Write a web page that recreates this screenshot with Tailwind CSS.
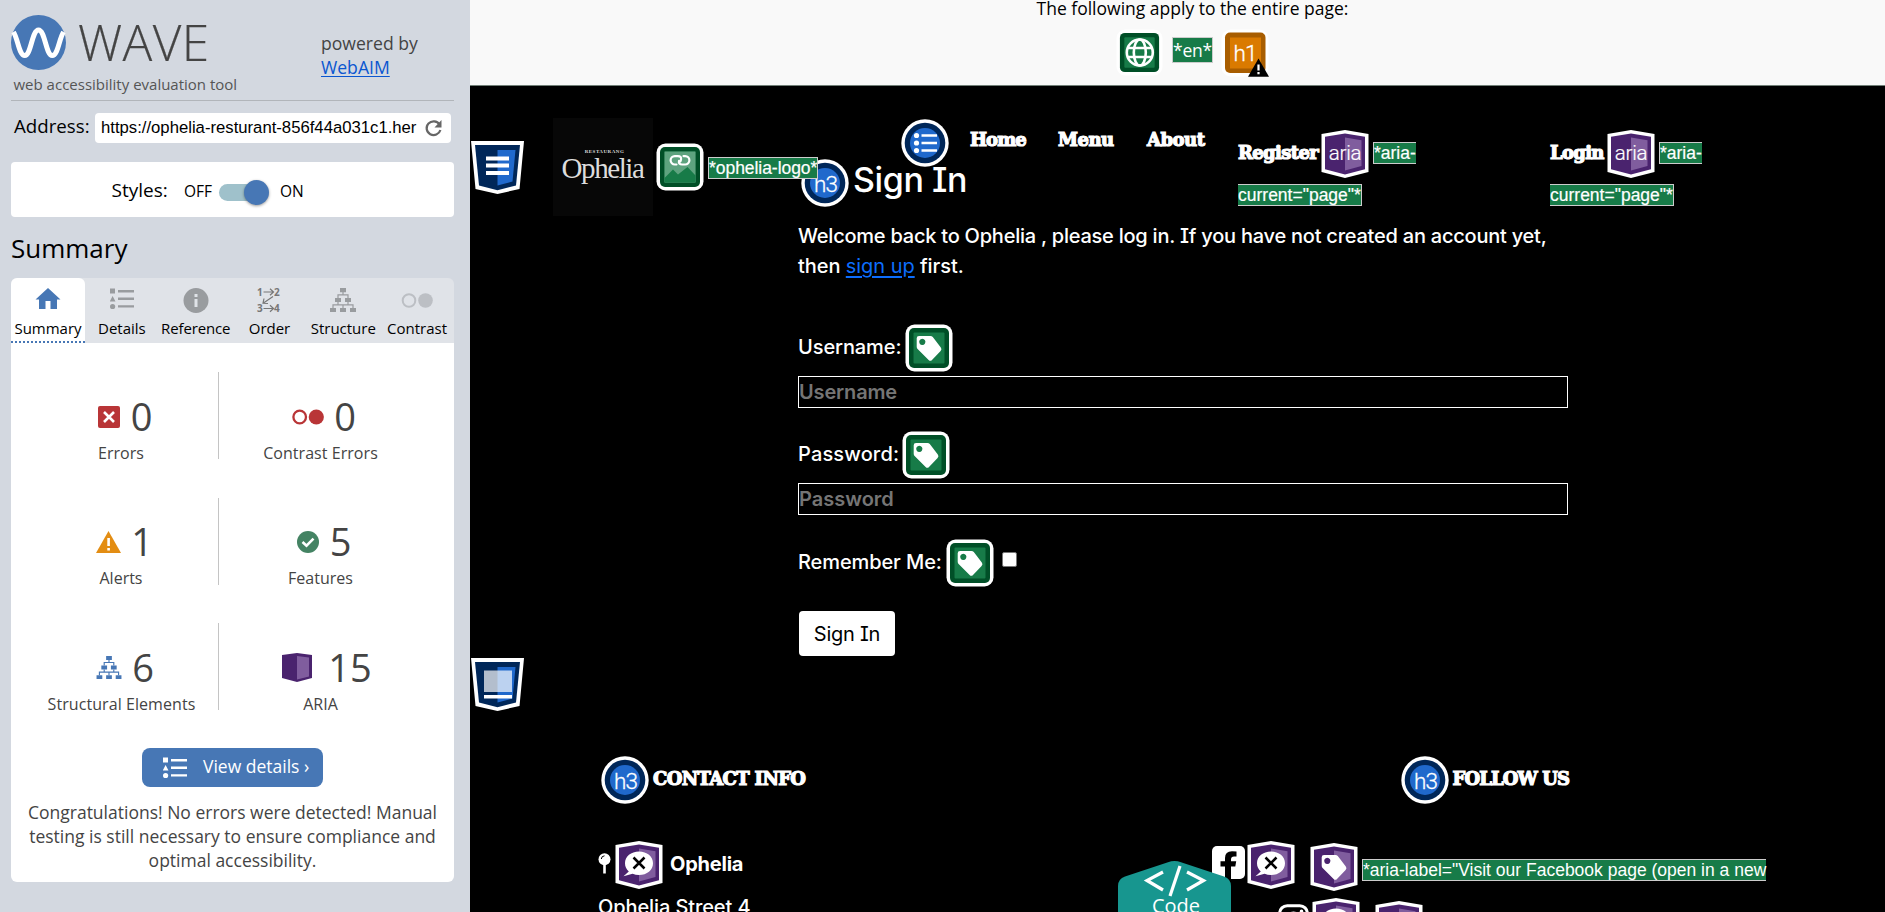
<!DOCTYPE html>
<html lang="en">
<head>
<meta charset="utf-8">
<title>WAVE - Ophelia</title>
<script src="https://cdn.jsdelivr.net/npm/@tailwindcss/browser@4"></script>
</head>
<body class="font-['Open_Sans',sans-serif]">
<svg class="hidden" xmlns="http://www.w3.org/2000/svg">
  <defs>
    <symbol id="list" viewBox="0 0 24 22"><path d="M0 0.5h5v5h-5zM8 2h16v2.4H8zM8 9.6h16V12H8zM8 17.2h16v2.4H8zM2.6 8l2.9 5.5H-.2z"/><circle cx="2.6" cy="18.5" r="2.6"/></symbol>
    <symbol id="tree" viewBox="0 0 26 24"><path d="M10 0h6v4.3h-6zM5 10h6v4H5zM15 10h6v4h-6zM0 20h6v4H0zM10 20h6v4h-6zM20 20h6v4h-6z"/><path d="M13 4v3M8 10V6.8h10V10M8 14v2.8M18 14v2.8M3 20v-3.2h20V20M13 20v-3.2" fill="none" stroke="currentColor" stroke-width="1.2"/></symbol>
    <symbol id="greenbox" viewBox="0 0 48 48"><rect x=".5" y=".5" width="47" height="47" rx="9" fill="#fff"/><rect x="4" y="4" width="40" height="40" rx="5" fill="#004f27"/><rect x="8.5" y="8.5" width="31" height="31" rx="1" fill="#177b48"/></symbol>
    <symbol id="tagshape" viewBox="0 0 48 48"><path fill-rule="evenodd" d="M14 12h11.500q1.300 0 2.300 1l8 10.500q1.400 1.900-.2 3.500l-8.600 8.900q-1.700 1.700-3.400 0L12.600 25q-.9-1-.9-2.300V14.300q0-2.300 2.300-2.300zM17.300 14.800a3.100 3.100 0 1 0 .01 0z"/></symbol>
    <symbol id="label" viewBox="0 0 48 48"><use href="#greenbox"/><use href="#tagshape" fill="#fff"/></symbol>
    <symbol id="h3" viewBox="0 0 48 48"><circle cx="24" cy="24" r="23.700" fill="#fff"/><circle cx="24" cy="24" r="20.300" fill="#002759"/><circle cx="24" cy="24" r="15" fill="#2069cc"/><text x="24.500" y="32.500" text-anchor="middle" font-family="Roboto" font-weight="300" font-size="22.500" letter-spacing="-1" fill="#fff" stroke="#fff" stroke-width=".3">h3</text></symbol>
    <symbol id="shield" viewBox="0 0 53 53"><path d="M0 0h53l-4.500 48L26.500 53 4.500 48z" fill="#fff"/><path d="M4 4h45l-4 40.500-18.500 4.700L8 44.500z" fill="#002759"/><path d="M26.500 9h18l-3 31.500-15 4z" fill="#2069cc"/></symbol>
    <symbol id="ariabox" viewBox="0 0 48 48"><path d="M.5 4L24 0l23.500 4v38L24 48 .5 42z" fill="#fff"/><path d="M4 6.700L24 3.500l20 3.200v32.600L24 44.500 4 39.300z" fill="#4a236e"/><path d="M24 7.500l16.500 2.800V36L24 40.500z" fill="#805d9e"/></symbol>
    <symbol id="ariatext" viewBox="0 0 48 48"><use href="#ariabox"/><text x="24" y="29.500" text-anchor="middle" font-family="Roboto" font-weight="300" font-size="20.500" letter-spacing="-.2" fill="#fff" stroke="#fff" stroke-width=".2">aria</text></symbol>
    <symbol id="ariahidden" viewBox="0 0 48 48"><use href="#ariabox"/><path d="M24 10.500c8 0 14 5 14 11.700s-6 11.800-14 11.800c-2.300 0-4.500-.4-6.400-1.200L8.500 35.300l5.300-4.800c-2.400-2.100-3.800-5-3.800-8.300 0-6.700 6-11.700 14-11.700z" fill="#fff"/><path d="M18.500 16.500l11 11M29.500 16.500l-11 11" stroke="#000" stroke-width="2.500"/></symbol>
    <symbol id="arialabel" viewBox="0 0 48 48"><use href="#ariabox"/><use href="#tagshape" fill="#fff"/></symbol>
  </defs>
</svg>

<div class="flex h-[912px] w-[1885px] overflow-hidden bg-black">

  <!-- WAVE sidebar -->
  <aside class="flex h-full w-[470px] shrink-0 flex-col bg-[#d3d8e0] pr-4 pl-[11px] text-[#444]">
    <div class="flex h-[101px] border-b border-[#b1b5ba] pt-[15px]">
      <div class="w-[310px]">
        <div class="flex h-[55px]">
          <svg class="size-[55px] shrink-0" viewBox="0 0 55 55"><circle cx="27.500" cy="27.500" r="27.500" fill="#4777b5"/><path d="M2.500 17C7 24 8 40.500 13.800 40.500 20 40.500 21 15 27.500 15S35 40.500 41.200 40.500C47 40.500 48 24 52.500 17" fill="none" stroke="#fff" stroke-width="5"/></svg>
          <div class="ml-[12px] text-[49.500px] leading-[55px] font-light tracking-[.4px] [-webkit-text-stroke:.2px_#444]">WAVE</div>
        </div>
        <div class="ml-[2.500px] whitespace-nowrap text-[15px] leading-[20px] pt-[4px] text-[#555]">web accessibility evaluation tool</div>
      </div>
      <div class="pt-[16px] text-[17.600px] leading-[24px]">powered by<br><a class="text-[#0a56d0] underline underline-offset-2">WebAIM</a></div>
    </div>
    <div class="mt-3 flex h-[30px] items-center text-black">
      <div class="ml-[3px] w-[81px] whitespace-nowrap text-[18.700px] leading-[24px] pb-[5px]">Address:</div>
      <div class="flex h-[30px] w-[356px] items-center overflow-hidden rounded-[4px] bg-white pl-[6px]">
        <span class="whitespace-nowrap font-['Liberation_Sans',sans-serif] text-[16.700px] pb-px">https://ophelia-resturant-856f44a031c1.her</span>
        <svg class="ml-[9px] size-[18px] shrink-0" viewBox="0 0 18 18"><path d="M14.500 5.500A7 6.800 0 1 0 15.400 11" fill="none" stroke="#666" stroke-width="2.200"/><path d="M16.500 1v7.500H9.500z" fill="#666"/></svg>
      </div>
    </div>
    <div class="mt-[19px] flex h-[55px] items-center rounded-[4px] bg-white pl-[100.500px] text-black">
      <span class="w-[72.500px] pt-px text-[19px] leading-6">Styles:</span>
      <span class="w-[35px] pt-[2px] text-[15.500px] leading-6">OFF</span>
      <div class="relative mt-[5px] h-[17px] w-[49px] rounded-full bg-[#9fc1cb]"><div class="absolute -top-1 left-[25px] size-[25px] rounded-full bg-[#4777b5] shadow-[0_1px_3px_rgba(0,0,0,.4)]"></div></div>
      <span class="ml-3 pt-[2px] text-[15.500px] leading-6">ON</span>
    </div>
    <h2 class="mt-[14px] h-[47px] text-[26px] leading-[34px] text-black">Summary</h2>
    <div class="flex h-[65px] rounded-t-[6px] bg-[#e0e3e8] text-center text-[15px] leading-[20px] text-black">
      <div class="flex w-[74px] flex-col items-center rounded-t-[6px] border-b-2 border-dotted border-[#4777b5] bg-white pt-[10px]">
        <svg class="h-[30px] w-[26px]" viewBox="0 0 26 30" fill="#4777b5"><path d="M13 0l12.500 11.500H22V21h-6.500v-8h-5v8H4V11.500H.5z"/></svg>Summary</div>
      <div class="flex w-[73.800px] flex-col items-center pt-[10px]">
        <div class="flex h-[30px] w-[24px]"><svg class="h-[22px] w-6" fill="#999c9f"><use href="#list"/></svg></div>Details</div>
      <div class="flex w-[73.800px] flex-col items-center pt-[10px] tracking-[-.15px]">
        <svg class="h-[30px] w-[26px]" viewBox="0 0 26 30"><circle cx="13" cy="12.500" r="12.500" fill="#999c9f"/><path d="M11.500 6h3v3h-3zM11.500 11h3v8h-3z" fill="#e0e3e8"/></svg>Reference</div>
      <div class="flex w-[73.800px] flex-col items-center pt-[10px]">
        <svg class="h-[30px] w-[26px]" viewBox="0 0 26 30"><g font-family="Open Sans" font-weight="700" font-size="10" fill="#777"><text x="1" y="7.500">1</text><text x="18" y="7.500">2</text><text x="1" y="24">3</text><text x="18" y="24">4</text></g><path d="M7.500 4h10M14 .8L17.500 4 14 7.200M7.500 20.500h10M14 17.300l3.500 3.200-3.500 3.200M17 8.500l-9.500 6.500M8 10.500L7 15.300l5 .2" fill="none" stroke="#777" stroke-width="1.200"/></svg>Order</div>
      <div class="flex w-[73.800px] flex-col items-center pt-[10px]">
        <div class="h-[30px] w-[26px]"><svg class="h-6 w-[26px] text-[#999c9f]" fill="currentColor"><use href="#tree"/></svg></div>Structure</div>
      <div class="flex w-[73.800px] flex-col items-center pt-[10px]">
        <svg class="h-[30px] w-[32px]" viewBox="0 0 32 30"><circle cx="8" cy="12.500" r="6.300" fill="none" stroke="#bcbfc4" stroke-width="2"/><circle cx="24.500" cy="12.500" r="7.300" fill="#bcbfc4"/></svg>Contrast</div>
    </div>
    <div class="h-[539px] rounded-b-[6px] bg-white pt-[29px]">
      <div class="grid auto-rows-[87px] grid-cols-[207px_1fr] gap-y-[38.500px] text-center text-[16px]">
        <div class="flex flex-col items-center pt-[24px] pr-[2px] pl-[15px]">
          <div class="flex h-[41px] items-center pl-[8px]"><svg class="mr-[11px] size-[22px]" viewBox="0 0 22 22"><rect width="22" height="22" rx="2" fill="#b93537"/><path d="M6 6l10 10M16 6L6 16" stroke="#fff" stroke-width="2.600"/></svg><span class="text-[38px] leading-[41px]">0</span></div>
          <div class="leading-6 pt-[4px]">Errors</div></div>
        <div class="flex flex-col items-center border-l border-[#c4c4c4] pt-[24px] pr-[32px]">
          <div class="flex h-[41px] items-center pl-[7px]"><svg class="mr-[10px] h-4 w-8" viewBox="0 0 32 16"><circle cx="7.700" cy="8" r="6.300" fill="none" stroke="#b93537" stroke-width="2.300"/><circle cx="24.300" cy="8" r="7.600" fill="#b93537"/></svg><span class="text-[38px] leading-[41px]">0</span></div>
          <div class="leading-6 pt-[4px] tracking-[.05px]">Contrast Errors</div></div>

        <div class="flex flex-col items-center pt-[23px] pr-[2px] pl-[15px]">
          <div class="flex h-[41px] items-center pl-[7px]"><svg class="mr-[10px] -mb-[1px] h-[22px] w-[25px]" viewBox="0 0 25 22"><path d="M12.500 0L25 22H0z" fill="#e38d13"/><path d="M11.300 7h2.600v8h-2.600zM11.300 17h2.600v2.600h-2.600z" fill="#fff"/></svg><span class="text-[38px] leading-[41px]">1</span></div>
          <div class="leading-6 pt-[4px]">Alerts</div></div>
        <div class="flex flex-col items-center border-l border-[#c4c4c4] pt-[23px] pr-[32px]">
          <div class="flex h-[41px] items-center pl-[7px]"><svg class="mr-[11px] -mb-[1px] size-[22px]" viewBox="0 0 22 22"><circle cx="11" cy="11" r="11" fill="#448363"/><path d="M5.500 11l4 3.700 7-7" fill="none" stroke="#fff" stroke-width="2.600"/></svg><span class="text-[38px] leading-[41px]">5</span></div>
          <div class="leading-6 pt-[4px]">Features</div></div>

        <div class="flex flex-col items-center pt-[24px] pr-[2px] pl-[15px]">
          <div class="flex h-[41px] items-center pl-[8px]"><svg class="mr-[10px] h-[23px] w-[26px] text-[#4777b5]" fill="currentColor"><use href="#tree"/></svg><span class="text-[38px] leading-[41px]">6</span></div>
          <div class="leading-6 pt-[4px] pl-px whitespace-nowrap tracking-[.07px]">Structural Elements</div></div>
        <div class="flex flex-col items-center border-l border-[#c4c4c4] pt-[24px] pr-[32px]">
          <div class="flex h-[41px] items-center pl-[13px]"><svg class="mr-[16px] -mt-[1px] h-[29px] w-[30px]" viewBox="0 0 30 29"><path d="M0 2l15-2 15 2v23l-15 4L0 25z" fill="#4a236e"/><path d="M15 3l12 1.500v19L15 26.500z" fill="#805d9e"/></svg><span class="text-[38px] leading-[41px]">15</span></div>
          <div class="leading-6 pt-[4px]">ARIA</div></div>
      </div>
      <div class="mx-auto mt-[38px] flex h-[39px] w-[181px] items-center rounded-[8px] bg-[#4777b5] pl-[21px] text-[17.500px] text-white">
        <svg class="mr-[16px] h-[22px] w-6" fill="#fff"><use href="#list"/></svg><span class="whitespace-nowrap pb-[2px]">View details ›</span>
      </div>
      <p class="mt-[13px] text-center text-[17.500px] leading-[24px] whitespace-nowrap">Congratulations! No errors were detected! Manual<br>testing is still necessary to ensure compliance and<br>optimal accessibility.</p>
    </div>
  </aside>

  <!-- Evaluated page -->
  <main class="relative flex h-full w-[1415px] flex-col overflow-hidden bg-black font-['Inter',sans-serif] text-[20px] leading-[30px] font-medium tracking-[-.23px] text-white [font-feature-settings:'cv08']">
    <div class="flex h-[86px] shrink-0 flex-col items-center border-b border-[#717f77] bg-[#f9f9f9] pl-[30px] font-['Open_Sans',sans-serif] font-normal tracking-normal text-black">
      <div class="h-[26px] text-[17.500px] leading-[17px]">The following apply to the entire page:</div>
      <div class="flex items-start">
        <svg class="mt-[3px] size-[47px]" viewBox="0 0 47 47"><use href="#greenbox"/><g fill="none" stroke="#fff" stroke-width="2.600"><circle cx="23.800" cy="23.500" r="13"/><ellipse cx="23.800" cy="23.500" rx="6" ry="13"/><path d="M12 19h23.600M12 28h23.600"/></g></svg>
        <span class="mt-[11px] ml-[9px] h-[26px] w-[41px] border border-[#ccc] bg-[#177b48] text-center text-[17.500px] leading-[24px] tracking-[-.2px] text-white">*en*</span>
        <svg class="mt-[3px] ml-[8px] h-[48px] w-[48px]" viewBox="0 0 48 48"><rect x=".5" y=".5" width="47" height="47" rx="9" fill="#fff"/><rect x="4" y="3.500" width="40.500" height="40.500" rx="5" fill="#a85d00"/><rect x="9" y="8.500" width="31" height="31" fill="#da7a00"/><text x="24" y="32" text-anchor="middle" font-family="Roboto" font-weight="300" font-size="22.500" letter-spacing="-1" fill="#fff" stroke="#fff" stroke-width=".3">h1</text><path d="M37.500 29.500L48 47.700H27z" fill="#000"/><path d="M36.400 35.500h2.200v6h-2.200zM36.400 43h2.200v2.200h-2.200z" fill="#fff"/></svg>
      </div>
    </div>

    <header class="relative z-10 flex h-[73px] shrink-0 items-start whitespace-nowrap font-['DejaVu_Serif',serif] text-[18px] font-bold tracking-[-.9px] [-webkit-text-stroke:1.200px_white]">
      <svg class="mt-[55px] ml-px size-[53px] shrink-0"><use href="#shield"/><path d="M15 15.500h23v4H15zM15 22.500h23v4H15zM15 30h23v4H15z" fill="#fff"/></svg>
      <div class="mt-[32px] ml-[29px] h-[98px] w-[100px] shrink-0 bg-[#070707] text-center font-['Liberation_Serif',serif] font-normal text-[#ddd] [-webkit-text-stroke:0]">
        <div class="mt-[29px] ml-[3px] text-[5px] leading-[9px] font-bold tracking-[.5px]">RESTAURANG</div>
        <div class="-mt-[2px] -ml-px text-[29px] leading-[29px] tracking-[-1.400px]">Ophelia</div>
      </div>
      <svg class="mt-[57px] ml-[3px] size-[48px] shrink-0" viewBox="0 0 48 48"><use href="#greenbox"/><path d="M8.500 8.500h31v31h-31z" fill="#5ea37f"/><path d="M8.500 35l8.500-8.500 5 5 9.500-7.500 8 8.500v7h-31z" fill="#177b48"/><g fill="none" stroke="#fff" stroke-width="2.200" stroke-linecap="round"><path d="M20.500 21.500h-1.700a4.200 4.200 0 0 1 0-8.400h3q4 0 3.200 3.600l-.6 1.800"/><path d="M27.500 13.100h1.700a4.200 4.200 0 0 1 0 8.400h-3q-4 0-3.200-3.600"/></g></svg>
      <span class="mt-[71px] ml-[4px] h-[22px] w-[110px] shrink-0 border border-[#ccc] bg-[#177b48] font-['Liberation_Sans',sans-serif] text-[17.500px] leading-5 font-normal tracking-[-.05px] [-webkit-text-stroke:.2px_white]">*ophelia-logo*</span>
      <svg class="mt-[33px] ml-[83px] size-[48px] shrink-0" viewBox="0 0 48 48"><circle cx="24" cy="24" r="23.700" fill="#fff"/><circle cx="24" cy="24" r="20.300" fill="#002759"/><circle cx="24" cy="24" r="15" fill="#2069cc"/><g fill="#fff"><circle cx="15.500" cy="16.500" r="2.600"/><circle cx="15.500" cy="24" r="2.600"/><circle cx="15.500" cy="31.500" r="2.600"/><path d="M20.500 15.300H36v2.400H20.500zM20.500 22.800H36v2.400H20.500zM20.500 30.300H36v2.400H20.500z"/></g></svg>
      <span class="mt-[39px] ml-[21px] w-[88px] shrink-0">Home</span>
      <span class="mt-[39px] w-[89px] shrink-0 tracking-[-.5px]">Menu</span>
      <span class="mt-[39px] w-[91px] shrink-0 tracking-[-.5px]">About</span>
      <div class="mt-[44px] w-[312px] shrink-0">
        <div class="flex"><span class="mt-[8px] w-[83px] tracking-[-.65px]">Register</span><svg class="size-[48px]"><use href="#ariatext"/></svg>
        <span class="mt-[12px] ml-[4px] h-[22px] w-[43px] border border-r-0 border-[#ccc] bg-[#177b48] font-['Liberation_Sans',sans-serif] text-[17.500px] leading-5 font-normal tracking-normal [-webkit-text-stroke:.2px_white]">*aria-</span></div>
        <div class="mt-[6px] h-[22px] w-[124px] border border-l-0 border-[#ccc] bg-[#177b48] font-['Liberation_Sans',sans-serif] text-[17.500px] leading-5 font-normal tracking-normal [-webkit-text-stroke:.2px_white]">current="page"*</div>
      </div>
      <div class="mt-[44px] shrink-0">
        <div class="flex"><span class="mt-[8px] w-[57px] tracking-[-.7px]">Login</span><svg class="size-[48px]"><use href="#ariatext"/></svg>
        <span class="mt-[12px] ml-[4px] h-[22px] w-[43px] border border-r-0 border-[#ccc] bg-[#177b48] font-['Liberation_Sans',sans-serif] text-[17.500px] leading-5 font-normal tracking-normal [-webkit-text-stroke:.2px_white]">*aria-</span></div>
        <div class="mt-[6px] h-[22px] w-[124px] border border-l-0 border-[#ccc] bg-[#177b48] font-['Liberation_Sans',sans-serif] text-[17.500px] leading-5 font-normal tracking-normal [-webkit-text-stroke:.2px_white]">current="page"*</div>
      </div>
    </header>

    <section class="w-[1098px] pl-[328px]">
      <h3 class="flex h-[48px] items-start text-[34px] leading-[42px] tracking-[-.4px]"><svg class="mr-1 ml-[3px] size-[48px]"><use href="#h3"/></svg>Sign In</h3>
      <p class="mt-[14px] whitespace-nowrap">Welcome back to Ophelia , please log in. If you have not created an account yet,<br><span class="tracking-[-.04px]">then <a class="font-normal text-[#0d6efd] underline underline-offset-[3px]">sign up</a> first.</span></p>
      <div class="mt-[43px] flex h-[48px] items-center"><span class="w-[107px] pb-[2px] tracking-[-.1px]">Username:</span><svg class="size-[48px]"><use href="#label"/></svg></div>
      <div class="mt-1 h-8 border border-white font-semibold tracking-[-.15px] text-[#757575]">Username</div>
      <div class="mt-[23px] flex h-[48px] items-center"><span class="w-[104px] pb-[2px] tracking-[.15px]">Password:</span><svg class="size-[48px]"><use href="#label"/></svg></div>
      <div class="mt-1 h-8 border border-white font-semibold tracking-[0px] text-[#757575]">Password</div>
      <div class="mt-[24px] flex h-[48px] items-center"><span class="w-[147.500px] pb-[3px] tracking-[-.1px]">Remember Me:</span><svg class="size-[48px]"><use href="#label"/></svg><div class="mb-2 ml-[8px] size-[15px] rounded-[2px] border border-[#767676] bg-white"></div></div>
      <div class="mt-[24px] ml-px flex h-[45px] w-[96px] items-center justify-center rounded-[4px] bg-white font-normal tracking-[-.25px] text-black">Sign In</div>
    </section>

    <svg class="mt-[2px] ml-px size-[53px] shrink-0"><use href="#shield"/><path d="M13 12.500h28V34H13z" fill="#fff" fill-opacity=".7"/><path d="M13 37h28v3.500H13z" fill="#fff"/></svg>

    <footer class="mt-[45px] flex h-[156px] shrink-0">
      <div class="w-[742px] pl-[128px]">
        <h3 class="flex h-[85px] items-start font-['DejaVu_Serif',serif] text-[18px] leading-[45px] font-bold tracking-[-.65px] [-webkit-text-stroke:1.200px_white]"><span class="mr-[4px] ml-[3px] [-webkit-text-stroke:0]"><svg class="size-[48px]"><use href="#h3"/></svg></span>CONTACT INFO</h3>
        <div class="flex h-[51px] items-start">
          <svg class="mt-[12px] h-[21px] w-[13px]" viewBox="0 0 13 21"><circle cx="6.500" cy="6.200" r="6" fill="#fff"/><path d="M5.200 11h2.600v9.500H5.200z" fill="#fff"/><path d="M3.300 6q.2-3 3.200-3.200" stroke="#000" fill="none"/></svg>
          <svg class="ml-[4px] size-[48px]"><use href="#ariahidden"/></svg>
          <strong class="mt-[8px] ml-[7px] font-bold">Ophelia</strong>
        </div>
        <div class="tracking-[-.1px]">Ophelia Street 4</div>
      </div>
      <div class="whitespace-nowrap">
        <h3 class="flex h-[85px] items-start pl-[188.500px] font-['DejaVu_Serif',serif] text-[18px] leading-[45px] font-bold tracking-[-.9px] [-webkit-text-stroke:1.200px_white]"><span class="mr-[4px] [-webkit-text-stroke:0]"><svg class="size-[48px]"><use href="#h3"/></svg></span>FOLLOW US</h3>
        <div class="flex h-[57px] items-start">
          <svg class="mt-[5px] size-[33px]" viewBox="0 0 33 33"><rect width="33" height="33" rx="5" fill="#fff"/><path d="M13 33V20.500H8.500v-5.300H13V12q0-6.800 7-6.800 2.500 0 4.500.4v5h-2.500q-3 0-3 3v1.600h5.200l-.9 5.300H19V33z" fill="#000"/></svg>
          <svg class="ml-[2px] size-[48px]"><use href="#ariahidden"/></svg>
          <svg class="mt-[2px] ml-[15px] size-[48px]"><use href="#arialabel"/></svg>
          <span class="mt-[18px] ml-[4px] h-[22px] w-[404px] shrink-0 border border-r-0 border-[#ccc] bg-[#177b48] font-['Liberation_Sans',sans-serif] text-[17.500px] leading-5 font-normal tracking-normal">*aria-label="Visit our Facebook page (open in a new</span>
        </div>
        <div class="flex h-[14px] items-start pl-[66px]">
          <svg class="mt-[6px] size-[31px]" viewBox="0 0 31 31"><rect x="1.700" y="1.700" width="27.600" height="27.600" rx="7.500" fill="none" stroke="#fff" stroke-width="3"/><circle cx="15.500" cy="15.500" r="6.500" fill="none" stroke="#fff" stroke-width="3"/><circle cx="23.500" cy="7.300" r="1.800" fill="#fff"/></svg>
          <svg class="ml-[3px] size-[48px]"><use href="#ariahidden"/></svg>
          <svg class="mt-[3px] ml-[15px] size-[48px]"><use href="#arialabel"/></svg>
        </div>
      </div>
    </footer>

    <!-- Floating code panel toggle -->
    <div class="absolute top-[861px] left-[648px] z-20 h-[51px] w-[113px] text-center font-['Open_Sans',sans-serif] font-normal tracking-normal">
      <svg class="h-[60px] w-[113px]" viewBox="0 0 113 60"><path d="M0 60V25q0-7 7-9.500L50 1.200q6.500-2.200 13 0l43 14.300q7 2.500 7 9.500v35z" fill="#17968f"/><path d="M45 11L29 19.500 45 29M69 11l16.500 8.500L69 29M62 5L52 35" fill="none" stroke="#fff" stroke-width="3.200"/></svg>
      <div class="absolute inset-x-0 top-[30px] pl-[3px] text-[20px] leading-[30px]">Code</div>
    </div>
  </main>
</div>
</body>
</html>
